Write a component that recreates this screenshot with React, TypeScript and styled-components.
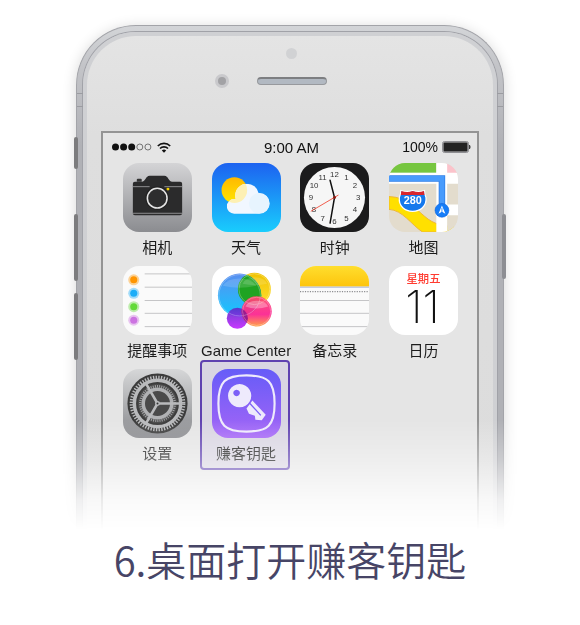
import React from "react";
import styled, { createGlobalStyle } from "styled-components";

const GlobalStyle = createGlobalStyle`
  * { box-sizing: border-box; }
  body {
    margin: 0;
    background: #fff;
    font-family: "Liberation Sans", "Noto Sans CJK SC", sans-serif;
  }
`;

const Page = styled.main`
  padding-bottom: 34px;
`;

const Stage = styled.section`
  display: flex;
  justify-content: center;
  padding: 25px 40px 0;
  mask-image: linear-gradient(to bottom, #000 420px, rgba(0, 0, 0, 0.66) 460px, rgba(0, 0, 0, 0.2) 500px, transparent 530px);
`;

const Phone = styled.div`
  position: relative;
  width: 100%;
  max-width: 428px;
  padding: 6px 6px 0;
  border: 1px solid #a3a4a9;
  border-bottom: 0;
  border-radius: 60px 60px 0 0;
  background: linear-gradient(to bottom, #d3d5d8 0, #c3c4c8 40px, #b0b1b6 120px);
  box-shadow: 0 2px 14px rgba(0, 0, 0, 0.16);
`;

const SideKey = styled.span<{ $side: "left" | "right"; $top: number; $length: number }>`
  position: absolute;
  top: ${(p) => p.$top}px;
  ${(p) => p.$side}: -3px;
  width: 4px;
  height: ${(p) => p.$length}px;
  border-radius: 2px;
  background: ${(p) => (p.$side === "left" ? "#7c7c7e" : "#8d8e93")};
`;

const AntennaBand = styled.span<{ $side: "left" | "right" }>`
  position: absolute;
  top: 67px;
  ${(p) => p.$side}: 0;
  width: 6px;
  height: 14px;
  border: solid #9b9ca1;
  border-width: 1px 0;
`;

const Face = styled.div`
  padding: 0 14px;
  border: solid #cfd0d3;
  border-width: 4px 4px 0;
  border-radius: 53px 53px 0 0;
  background: linear-gradient(to bottom, #e4e4e4 0, #dedede 100px, #dcdcdc 100%);
  box-shadow: 0 0 0 1px #a1a2a8;
`;

const Earpiece = styled.header`
  display: grid;
  grid-template-columns: 1fr 70px 1fr;
  grid-template-rows: 12px 14px;
  gap: 15px 28px;
  align-items: center;
  align-content: start;
  justify-items: center;
  height: 95px;
  padding: 11px 0 0 3px;
`;

const Sensor = styled.span`
  grid-column: 2;
  width: 11px;
  height: 11px;
  border-radius: 50%;
  background: #d1d2d4;
`;

const FrontCamera = styled.span`
  grid-column: 1;
  justify-self: end;
  width: 14px;
  height: 14px;
  border: 3px solid #c9c9cc;
  border-radius: 50%;
  background: #a2a2a5;
`;

const Speaker = styled.span`
  width: 70px;
  height: 8px;
  border: 1px solid #97999d;
  border-top: 2px solid #7d7e81;
  border-radius: 4px;
  background: #b2b9c2;
`;

const Screen = styled.div`
  height: 400px;
  border: 2px solid #949494;
  border-bottom: 0;
  background: #e5e5e5;
`;

const StatusBar = styled.div`
  display: grid;
  grid-template-columns: 1fr auto 1fr;
  align-items: center;
  height: 28px;
  margin-bottom: 2px;
  padding: 0 6px 0 9px;
  color: #111;
  font-size: 14px;
`;

const Signal = styled.div`
  display: flex;
  align-items: center;
  gap: 5px;
`;

const Time = styled.time`
  font-size: 15px;
`;

const Power = styled.div`
  display: flex;
  align-items: center;
  justify-content: flex-end;
  gap: 4px;
`;

const AppGrid = styled.div`
  display: grid;
  grid-template-columns: repeat(4, 1fr);
  row-gap: 8px;
  padding: 0 9px 0 10px;
`;

const AppButton = styled.button<{ $selected?: boolean }>`
  position: relative;
  display: flex;
  flex-direction: column;
  align-items: center;
  gap: 6px;
  min-width: 0;
  padding: 0;
  border: 0;
  background: none;
  color: #1c1c1c;
  font: inherit;
  font-size: 15px;
  line-height: 20px;
  white-space: nowrap;
  isolation: isolate;

  &::before {
    content: "";
    display: ${(p) => (p.$selected ? "block" : "none")};
    position: absolute;
    z-index: -1;
    inset: -9px 1px -6px -2px;
    border: 2px solid #5f41b0;
    border-radius: 4px;
    background: #d9d5e2;
  }
`;

const IconArt = styled.svg`
  display: block;
  width: 69px;
  height: 69px;
  border-radius: 16px;
`;

const Caption = styled.h1`
  margin: 0;
  color: #474566;
  font-family: "Noto Sans CJK SC", sans-serif;
  font-size: 40px;
  font-weight: 350;
  line-height: 56px;
  text-align: center;
`;

const CameraIcon = () => (
  <IconArt viewBox="0 0 70 70" aria-hidden="true">
    <defs>
      <linearGradient id="steel" x2="0" y2="1">
        <stop stopColor="#d4d4d6" />
        <stop offset="1" stopColor="#8b8c90" />
      </linearGradient>
    </defs>
    <rect width="70" height="70" fill="url(#steel)" />
    <path d="M14 19v-2q0-1 1-1h3q1 0 1 1v2z" fill="#333" />
    <path d="M10 21q0-2 2-2h7c4 0 4-6 8-6h15c4 0 4 6 8 6h8q2 0 2 2v30q0 2-2 2H12q-2 0-2-2z" fill="#2b2b2c" />
    <path d="M10 24h17M42 24h18M10 51h50" stroke="#8f8f91" strokeWidth="1" />
    <circle cx="34.7" cy="35.7" r="12" fill="#222" />
    <circle cx="34.7" cy="35.7" r="10" fill="#2d2d2e" stroke="#e4e4e4" strokeWidth="1.6" />
    <circle cx="45.6" cy="26.5" r="1.5" fill="#f4d000" />
  </IconArt>
);

const WeatherIcon = () => (
  <IconArt viewBox="0 0 70 70" aria-hidden="true">
    <defs>
      <linearGradient id="sky" x2="0" y2="1">
        <stop stopColor="#1d62f0" />
        <stop offset="1" stopColor="#19cdfd" />
      </linearGradient>
      <linearGradient id="sun" x2="0" y2="1">
        <stop stopColor="#ffb800" />
        <stop offset="1" stopColor="#ffe600" />
      </linearGradient>
      <clipPath id="cloudShape">
        <circle cx="22.5" cy="44" r="7.500" />
        <circle cx="35.5" cy="33" r="12" />
        <circle cx="48" cy="41" r="10.500" />
        <rect x="22.5" y="37" width="25.500" height="14.500" />
      </clipPath>
    </defs>
    <rect width="70" height="70" fill="url(#sky)" />
    <circle cx="22.7" cy="27.5" r="13" fill="url(#sun)" />
    <g clipPath="url(#cloudShape)">
      <rect width="70" height="70" fill="#f1f7ff" />
      <circle cx="48" cy="41" r="10.500" fill="#e3f2fe" opacity=".7" />
      <circle cx="22.7" cy="27.5" r="13" fill="#fdf0b4" />
    </g>
  </IconArt>
);

const hours = Array.from({ length: 12 }, (_, i) => {
  const angle = ((i + 1) * Math.PI) / 6;
  return { label: i + 1, x: 35 + Math.sin(angle) * 24, y: 35 - Math.cos(angle) * 24 + 2.8 };
});

const ClockIcon = () => (
  <IconArt viewBox="0 0 70 70" aria-hidden="true">
    <rect width="70" height="70" fill="#1b1b1c" />
    <circle cx="35" cy="35" r="31" fill="#f6f6f6" />
    <g fontSize="8" fill="#333" textAnchor="middle">
      {hours.map((h) => (
        <text key={h.label} x={h.x} y={h.y}>{h.label}</text>
      ))}
    </g>
    <path d="M35 35L30.500 17.500M35 35L30.500 61" stroke="#111" strokeWidth="1.500" strokeLinecap="round" />
    <path d="M39 32.500L11 49" stroke="#f04b38" strokeWidth=".9" />
    <circle cx="35" cy="35" r="1.500" fill="#8c1c14" />
  </IconArt>
);

const MapIcon = () => (
  <IconArt viewBox="0 0 70 70" aria-hidden="true">
    <rect width="70" height="70" fill="#e3dccd" />
    <path d="M0 34C20 35 26 46 36 54C46 63 56 64 70 65V70H34C22 62 14 48 0 47z" fill="#ffe000" stroke="#efb636" strokeWidth="1" />
    <path d="M59 59H70V65Q64 66 62 70H59z" fill="#e3dccd" />
    <rect width="48" height="10" fill="#76c63f" />
    <rect x="58" width="12" height="11" fill="#fbc3cb" />
    <path d="M0 10h48V0h11v10h11v11H59v21h11v11H59v17H48V21H0z" fill="#fff" />
    <path d="M0 15.700H53.700V46" fill="none" stroke="#2f7fe8" strokeWidth="6.600" />
    <path d="M0 15.700H53.700V46" fill="none" stroke="#489bfc" strokeWidth="5" />
    <path d="M12 28q6 2 12 0q6 2 12 0q0 4 1.500 7c1 9-6 14-13.500 14S9.500 44 10.500 35Q12 32 12 28z" fill="#1679ec" stroke="#fff" strokeWidth="1.200" />
    <path d="M12.500 28.500q6 2 11.500 0q6 2 11.500 0l.5 4H12z" fill="#d9262d" />
    <text x="24.200" y="42" fill="#fff" fontSize="11" fontWeight="700" textAnchor="middle">280</text>
    <circle cx="53.700" cy="48" r="7" fill="#167df8" stroke="#0f62d8" strokeWidth=".6" />
    <path d="M53.700 43l3.500 8.500-3.500-2-3.500 2z" fill="#fff" />
    <path d="M53.700 45.500v5" stroke="#167df8" strokeWidth=".8" />
  </IconArt>
);

const reminderDots = [
  { y: 14, color: "#ff9500" },
  { y: 27.7, color: "#1badf8" },
  { y: 41.3, color: "#63da38" },
  { y: 55, color: "#cc73e1" },
];

const RemindersIcon = () => (
  <IconArt viewBox="0 0 70 70" aria-hidden="true">
    <rect width="70" height="70" fill="#fafafa" />
    <path d="M22 8h48M22 21.500h48M22 35h48M22 48h48M22 61.500h48" stroke="#c4c4c6" strokeWidth="1" />
    {reminderDots.map((d) => (
      <g key={d.color} fill={d.color}>
        <circle cx="10.900" cy={d.y} r="5.600" opacity=".4" />
        <circle cx="10.900" cy={d.y} r="3.600" />
      </g>
    ))}
  </IconArt>
);

const GameCenterIcon = () => (
  <IconArt viewBox="0 0 70 70" aria-hidden="true">
    <defs>
      <linearGradient id="bubbleBlue" x2="0" y2="1">
        <stop stopColor="#5a8ff0" />
        <stop offset="1" stopColor="#12c8ff" />
      </linearGradient>
      <linearGradient id="bubbleGold" x2="0" y2="1">
        <stop stopColor="#f0c200" />
        <stop offset="1" stopColor="#ffe030" />
      </linearGradient>
      <linearGradient id="bubblePink" x2="0" y2="1">
        <stop stopColor="#ff4a6c" />
        <stop offset=".6" stopColor="#fb2490" />
        <stop offset="1" stopColor="#ff9c3c" />
      </linearGradient>
      <linearGradient id="bubbleViolet" x2="0" y2="1">
        <stop stopColor="#5a2fc8" />
        <stop offset="1" stopColor="#c326ff" />
      </linearGradient>
      <clipPath id="blueArea">
        <circle cx="28" cy="29.700" r="22" />
      </clipPath>
      <clipPath id="violetArea">
        <circle cx="25.700" cy="53" r="10.700" />
      </clipPath>
    </defs>
    <rect width="70" height="70" fill="#fff" />
    <circle cx="43" cy="23.500" r="16.700" fill="url(#bubbleGold)" />
    <circle cx="28" cy="29.700" r="22" fill="url(#bubbleBlue)" />
    <circle cx="43" cy="23.500" r="16.700" fill="#1fa322" clipPath="url(#blueArea)" />
    <circle cx="25.700" cy="53" r="10.700" fill="url(#bubbleViolet)" opacity=".92" />
    <circle cx="45.300" cy="46" r="15.300" fill="url(#bubblePink)" opacity=".94" />
    <circle cx="45.300" cy="46" r="15.300" fill="#9a1a90" clipPath="url(#violetArea)" />
    <g fill="none" stroke="#fff" strokeWidth=".8" opacity=".35">
      <circle cx="28" cy="29.700" r="21" />
      <circle cx="43" cy="23.500" r="15.700" />
      <circle cx="45.300" cy="46" r="14.300" />
    </g>
    <path d="M11 20a18.500 12 0 0 1 34 0q-17 4-34 0z" fill="#fff" opacity=".14" />
    <path d="M31 18a13 9 0 0 1 25 0q-12 3-25 0z" fill="#fff" opacity=".14" />
    <path d="M34 41a12 8 0 0 1 23 0q-12 4-23 0z" fill="#fff" opacity=".3" />
  </IconArt>
);

const NotesIcon = () => (
  <IconArt viewBox="0 0 70 70" aria-hidden="true">
    <defs>
      <linearGradient id="binding" x2="0" y2="1">
        <stop stopColor="#ffde2e" />
        <stop offset="1" stopColor="#fdc40c" />
      </linearGradient>
    </defs>
    <rect width="70" height="70" fill="#fafafa" />
    <rect width="70" height="21" fill="url(#binding)" />
    <path d="M0 21.500h70" stroke="#c3cbe0" strokeWidth="1.400" />
    <path d="M0 26h70" stroke="#8c8c90" strokeWidth="1.200" strokeDasharray="1.200 1.300" />
    <path d="M0 35h70M0 48h70M0 61.500h70" stroke="#c4c4c6" strokeWidth="1" />
  </IconArt>
);

const CalendarIcon = () => (
  <IconArt viewBox="0 0 70 70" aria-hidden="true">
    <rect width="70" height="70" fill="#fff" />
    <text x="35" y="17" fill="#ff3b30" fontSize="11.500" fontWeight="500" fontFamily="Noto Sans CJK SC" textAnchor="middle">星期五</text>
    <text x="34" y="58" fill="#111" fontSize="46" fontWeight="200" fontFamily="Inter" textAnchor="middle">11</text>
  </IconArt>
);

const SettingsIcon = () => (
  <IconArt viewBox="0 0 70 70" aria-hidden="true">
    <defs>
      <linearGradient id="plate" x2="0" y2="1">
        <stop stopColor="#d6d7d8" />
        <stop offset="1" stopColor="#88898d" />
      </linearGradient>
    </defs>
    <rect width="70" height="70" fill="url(#plate)" />
    <g fill="none">
      <circle cx="35" cy="35" r="30.500" fill="#3c3c3c" />
      <circle cx="35" cy="35" r="26.500" stroke="#b9babc" strokeWidth="3.500" strokeDasharray="1.400 1.375" />
      <circle cx="35" cy="35" r="23.500" stroke="#b9babc" strokeWidth="3.500" />
      <circle cx="35" cy="35" r="20" fill="#4a4a4a" />
      <circle cx="35" cy="35" r="17.500" stroke="#a0a1a3" strokeWidth="2.500" strokeDasharray="1.100 1.100" />
      <circle cx="35" cy="35" r="14.500" stroke="#b0b1b3" strokeWidth="3.600" />
      <path d="M35 35H58M35 35L23.500 15M35 35L23.500 55" stroke="#b9babc" strokeWidth="2.600" />
      <circle cx="35" cy="35" r="2.500" fill="#b9babc" />
      <circle cx="35" cy="35" r="1" fill="#333" />
    </g>
  </IconArt>
);

const KeyIcon = () => (
  <IconArt viewBox="0 0 70 70" aria-hidden="true">
    <defs>
      <linearGradient id="violet" x2="0" y2="1">
        <stop stopColor="#665cf8" />
        <stop offset="1" stopColor="#a565f6" />
      </linearGradient>
    </defs>
    <rect width="70" height="70" fill="url(#violet)" />
    <path d="M35 6.500C57 6.500 63.500 13 63.500 35S57 63.500 35 63.500 6.500 57 6.500 35 13 6.500 35 6.500z" fill="none" stroke="#eeeafc" strokeWidth="2.200" />
    <path fillRule="evenodd" d="M28 15.300a11.800 11.800 0 1 0 .1 0zM25 21a3.300 3.300 0 1 1-.1 0z" fill="#eeeafc" />
    <path d="M41 32L54.500 46.500L50.500 52L44 51.500L43.500 47.500L37.500 45.500L35 40z" fill="#eeeafc" />
    <path d="M38.500 35L49.500 47" stroke="#7a5ef7" strokeWidth="1.300" />
  </IconArt>
);

const apps = [
  { name: "相机", Icon: CameraIcon },
  { name: "天气", Icon: WeatherIcon },
  { name: "时钟", Icon: ClockIcon },
  { name: "地图", Icon: MapIcon },
  { name: "提醒事项", Icon: RemindersIcon },
  { name: "Game Center", Icon: GameCenterIcon },
  { name: "备忘录", Icon: NotesIcon },
  { name: "日历", Icon: CalendarIcon },
  { name: "设置", Icon: SettingsIcon },
  { name: "赚客钥匙", Icon: KeyIcon, selected: true },
];

const SignalDots = () => (
  <svg width="40" height="8" viewBox="0 0 40 8" role="img" aria-label="Signal">
    {[0, 1, 2, 3, 4].map((i) => (
      <circle key={i} cx={3.5 + i * 8.1} cy="4" r={i < 3 ? 3.5 : 3} fill={i < 3 ? "#111" : "none"} stroke={i < 3 ? "none" : "#555"} strokeWidth=".8" />
    ))}
  </svg>
);

const Wifi = () => (
  <svg width="14" height="11" viewBox="0 0 14 11" role="img" aria-label="Wi-Fi">
    <path d="M.8 4a8.800 8.800 0 0 1 12.400 0M3 6.500a5.700 5.700 0 0 1 8 0" fill="none" stroke="#111" strokeWidth="1.700" />
    <path d="M4.800 8.500a3.100 3.100 0 0 1 4.400 0L7 10.800z" fill="#111" />
  </svg>
);

const Battery = () => (
  <svg width="29" height="12" viewBox="0 0 29 12" role="img" aria-label="Battery">
    <rect x=".5" y=".5" width="26" height="11" rx="2" fill="#c4c4c6" stroke="#8f8f93" />
    <rect x="1.500" y="1.500" width="24" height="9" rx="1" fill="#222" />
    <path d="M27.500 4q1.500 2 0 4z" fill="#222" stroke="#222" strokeWidth=".6" />
  </svg>
);

export default function App() {
  return (
    <Page>
      <GlobalStyle />
      <Stage>
        <Phone>
          <AntennaBand $side="left" />
          <AntennaBand $side="right" />
          <SideKey $side="left" $top={111} $length={32} />
          <SideKey $side="left" $top={188} $length={67} />
          <SideKey $side="left" $top={267} $length={67} />
          <SideKey $side="right" $top={188} $length={65} />
          <Face>
            <Earpiece>
              <Sensor />
              <FrontCamera />
              <Speaker />
            </Earpiece>
            <Screen>
              <StatusBar>
                <Signal>
                  <SignalDots />
                  <Wifi />
                </Signal>
                <Time>9:00 AM</Time>
                <Power>
                  <span>100%</span>
                  <Battery />
                </Power>
              </StatusBar>
              <AppGrid>
                {apps.map(({ name, Icon, selected }) => (
                  <AppButton key={name} type="button" $selected={selected}>
                    <Icon />
                    <span>{name}</span>
                  </AppButton>
                ))}
              </AppGrid>
            </Screen>
          </Face>
        </Phone>
      </Stage>
      <Caption>6.桌面打开赚客钥匙</Caption>
    </Page>
  );
}
